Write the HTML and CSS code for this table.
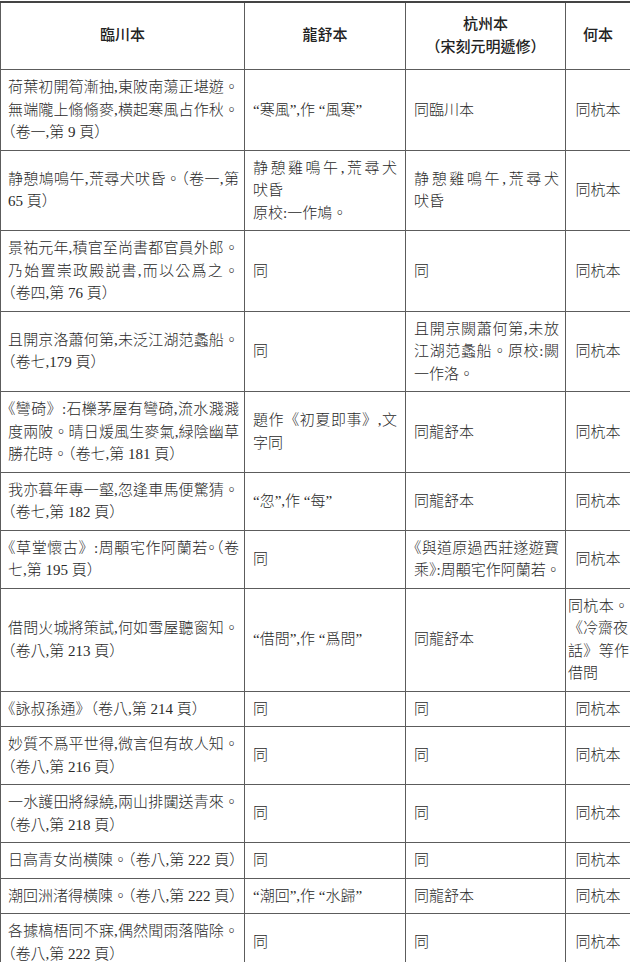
FILE: index.html
```html
<!DOCTYPE html>
<html lang="zh-Hant">
<head>
<meta charset="utf-8">
<title>版本對照表</title>
<link rel="stylesheet" href="styles.css">
</head>
<body>
<table class="tbl">
  <colgroup>
    <col class="w1"><col class="w2"><col class="w3"><col class="w4">
  </colgroup>
  <thead>
    <tr>
      <th>臨川本</th>
      <th>龍舒本</th>
      <th>杭州本<br>（宋刻元明遞修）</th>
      <th>何本</th>
    </tr>
  </thead>
  <tbody>
    <tr>
      <td class="c1"><span class="ln j">荷葉初開筍漸抽,東陂南蕩正堪遊。</span><span class="ln j">無端隴上翛翛麥,橫起寒風占作秋。</span><span class="ln"><span class="hw">（</span>卷一,第 9 頁）</span></td>
      <td class="c2"><span class="ln">“寒風”,作 “風寒”</span></td>
      <td class="c3"><span class="ln">同臨川本</span></td>
      <td class="c4">同杭本</td>
    </tr>
    <tr>
      <td class="c1"><span class="ln j">静憩鳩鳴午,荒尋犬吠昏。（卷一,第</span><span class="ln">65 頁）</span></td>
      <td class="c2"><span class="ln j">静憩雞鳴午,荒尋犬</span><span class="ln">吠昏</span><span class="ln">原校:一作鳩。</span></td>
      <td class="c3"><span class="ln j">静憩雞鳴午,荒尋犬</span><span class="ln">吠昏</span></td>
      <td class="c4">同杭本</td>
    </tr>
    <tr>
      <td class="c1"><span class="ln j">景祐元年,積官至尚書都官員外郎。</span><span class="ln j">乃始置崇政殿説書,而以公爲之。</span><span class="ln"><span class="hw">（</span>卷四,第 76 頁）</span></td>
      <td class="c2"><span class="ln">同</span></td>
      <td class="c3"><span class="ln">同</span></td>
      <td class="c4">同杭本</td>
    </tr>
    <tr>
      <td class="c1"><span class="ln j">且開京洛蕭何第,未泛江湖范蠡船。</span><span class="ln"><span class="hw">（</span>卷七,179 頁）</span></td>
      <td class="c2"><span class="ln">同</span></td>
      <td class="c3"><span class="ln j">且開京闕蕭何第,未放</span><span class="ln j">江湖范蠡船。原校:闕</span><span class="ln">一作洛。</span></td>
      <td class="c4">同杭本</td>
    </tr>
    <tr>
      <td class="c1"><span class="ln j"><span class="hw">《</span>彎碕》:石櫟茅屋有彎碕,流水濺濺</span><span class="ln j">度兩陂。晴日煖風生麥氣,緑陰幽草</span><span class="ln">勝花時。（卷七,第 181 頁）</span></td>
      <td class="c2"><span class="ln j">題作《初夏即事》,文</span><span class="ln">字同</span></td>
      <td class="c3"><span class="ln">同龍舒本</span></td>
      <td class="c4">同杭本</td>
    </tr>
    <tr>
      <td class="c1"><span class="ln j">我亦暮年專一壑,忽逢車馬便驚猜。</span><span class="ln"><span class="hw">（</span>卷七,第 182 頁）</span></td>
      <td class="c2"><span class="ln">“忽”,作 “每”</span></td>
      <td class="c3"><span class="ln">同龍舒本</span></td>
      <td class="c4">同杭本</td>
    </tr>
    <tr>
      <td class="c1"><span class="ln j"><span class="hw">《</span>草堂懷古》:周顒宅作阿蘭若<span class="hw">。</span>（卷</span><span class="ln">七,第 195 頁）</span></td>
      <td class="c2"><span class="ln">同</span></td>
      <td class="c3"><span class="ln j"><span class="hw">《</span>與道原過西莊遂遊寶</span><span class="ln">乘<span class="hw">》</span>:周顒宅作阿蘭若。</span></td>
      <td class="c4">同杭本</td>
    </tr>
    <tr>
      <td class="c1"><span class="ln j">借問火城將策試,何如雪屋聽窗知。</span><span class="ln"><span class="hw">（</span>卷八,第 213 頁）</span></td>
      <td class="c2"><span class="ln">“借問”,作 “爲問”</span></td>
      <td class="c3"><span class="ln">同龍舒本</span></td>
      <td class="c4 narrow"><span class="ln j">同杭本。</span><span class="ln">《冷齋夜</span><span class="ln j">話》等作</span><span class="ln">借問</span></td>
    </tr>
    <tr>
      <td class="c1"><span class="ln"><span class="hw">《</span>詠叔孫通》（卷八,第 214 頁）</span></td>
      <td class="c2"><span class="ln">同</span></td>
      <td class="c3"><span class="ln">同</span></td>
      <td class="c4">同杭本</td>
    </tr>
    <tr>
      <td class="c1"><span class="ln j">妙質不爲平世得,微言但有故人知。</span><span class="ln"><span class="hw">（</span>卷八,第 216 頁）</span></td>
      <td class="c2"><span class="ln">同</span></td>
      <td class="c3"><span class="ln">同</span></td>
      <td class="c4">同杭本</td>
    </tr>
    <tr>
      <td class="c1"><span class="ln j">一水護田將緑繞,兩山排闥送青來。</span><span class="ln"><span class="hw">（</span>卷八,第 218 頁）</span></td>
      <td class="c2"><span class="ln">同</span></td>
      <td class="c3"><span class="ln">同</span></td>
      <td class="c4">同杭本</td>
    </tr>
    <tr>
      <td class="c1"><span class="ln">日高青女尚橫陳。（卷八,第 222 頁）</span></td>
      <td class="c2"><span class="ln">同</span></td>
      <td class="c3"><span class="ln">同</span></td>
      <td class="c4">同杭本</td>
    </tr>
    <tr>
      <td class="c1"><span class="ln">潮回洲渚得橫陳。（卷八,第 222 頁）</span></td>
      <td class="c2"><span class="ln">“潮回”,作 “水歸”</span></td>
      <td class="c3"><span class="ln">同龍舒本</span></td>
      <td class="c4">同杭本</td>
    </tr>
    <tr>
      <td class="c1"><span class="ln j">各據槁梧同不寐,偶然聞雨落階除。</span><span class="ln"><span class="hw">（</span>卷八,第 222 頁）</span></td>
      <td class="c2"><span class="ln">同</span></td>
      <td class="c3"><span class="ln">同</span></td>
      <td class="c4">同杭本</td>
    </tr>
  </tbody>
</table>
</body>
</html>
```

FILE: styles.css
```css
html, body {
  margin: 0;
  padding: 0;
  background: #ffffff;
}

body {
  font-family: "Liberation Serif", "Noto Sans CJK TC", serif;
  font-size: 15px;
  font-weight: 300;
  color: #2a2a2a;
}

.tbl {
  border-collapse: collapse;
  table-layout: fixed;
  width: 630px;
  margin-top: 1px;
}

.w1 { width: 244px; }
.w2 { width: 161px; }
.w3 { width: 160px; }
.w4 { width: 65px; }

.tbl th,
.tbl td {
  border: 1px solid #5c5c5c;
  vertical-align: middle;
  line-height: 22.5px;
}

.tbl th {
  font-family: "Noto Sans CJK TC", sans-serif;
  font-weight: 500;
  font-size: 15px;
  color: #222222;
  text-align: center;
  padding: 9px 2px 12px;
  border-top: 2px solid #444444;
}

.tbl td {
  text-align: left;
  padding: 6px 6px 6px 8px;
}

.tbl td.c1 { padding-left: 7px; padding-right: 5px; }
.tbl td.c2 { padding-left: 8px; padding-right: 8px; }
.tbl td.c3 { padding-left: 8px; padding-right: 6px; }
.tbl td.c4 { padding-left: 2px; padding-right: 2px; text-align: center; }
.tbl td.narrow { text-align: left; padding-left: 2px; padding-right: 1px; }

.ln {
  display: block;
  white-space: nowrap;
}

.j {
  text-align: justify;
  text-align-last: justify;
}

.hw {
  font-feature-settings: "halt" 1;
}
```
